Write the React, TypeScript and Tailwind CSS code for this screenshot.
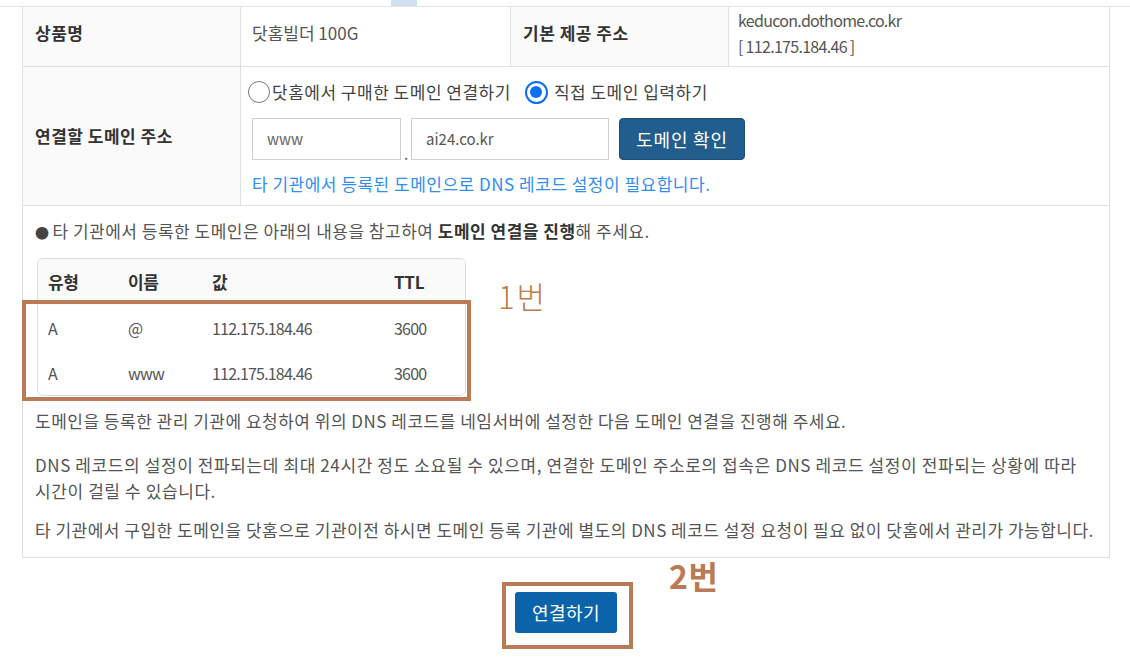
import React from 'react';

const dnsRows = [
  { type: 'A', name: '@', value: '112.175.184.46', ttl: '3600' },
  { type: 'A', name: 'www', value: '112.175.184.46', ttl: '3600' },
];

const font = { fontFamily: '"Noto Sans CJK KR", "Noto Sans", sans-serif' };

export default function App() {
  return (
    <div className="relative w-[1130px] h-[662px] overflow-hidden bg-white text-[17px] tracking-[0.5px] text-[#555]" style={font}>
      {/* top strip */}
      <div className="h-[6px] pl-[391px]">
        <div className="w-[26px] h-[6px] bg-[#cfe0f0]" />
      </div>

      <div className="border-t border-[#e4e4e4]">
        <div className="ml-[22px] w-[1088px] border-x border-b border-[#e0e0e0]">
          {/* row 1 */}
          <div className="grid grid-cols-[218px_270px_218px_1fr] h-[60px] border-b border-[#e0e0e0]">
            <div className="flex items-center pl-[12px] pb-[7px] bg-[#fafafa] border-r border-[#e0e0e0] font-bold text-[#333]">상품명</div>
            <div className="flex items-center pl-[11px] pb-[7px] border-r border-[#e0e0e0] tracking-[0px]">닷홈빌더 100G</div>
            <div className="flex items-center pl-[12px] pb-[7px] bg-[#fafafa] border-r border-[#e0e0e0] font-bold text-[#333]">기본 제공 주소</div>
            <div className="pl-[9px] text-[16px] leading-[26px] tracking-[-0.7px]">
              <div>keducon.dothome.co.kr</div>
              <div>[ 112.175.184.46 ]</div>
            </div>
          </div>

          {/* row 2 */}
          <div className="grid grid-cols-[218px_1fr] h-[139px] border-b border-[#e0e0e0]">
            <div className="flex items-center pl-[12px] bg-[#fafafa] border-r border-[#e0e0e0] font-bold text-[#333]">연결할 도메인 주소</div>
            <div className="pl-[7px] pt-[13px]">
              <div className="flex items-center h-[24px]">
                <span className="w-[22px] h-[22px] rounded-full border-[1.5px] border-[#767676] bg-white" />
                <span className="ml-[2px] text-[#444]">닷홈에서 구매한 도메인 연결하기</span>
                <span className="ml-[14px] w-[23px] h-[23px] rounded-full border-[2px] border-[#0b6ff0] flex items-center justify-center">
                  <span className="w-[12px] h-[12px] rounded-full bg-[#0b6ff0]" />
                </span>
                <span className="ml-[6px] text-[#444]">직접 도메인 입력하기</span>
              </div>
              <div className="flex items-end mt-[14px] pl-[4px] tracking-[0px]">
                <div className="w-[149px] h-[42px] border border-[#cfcfcf] flex items-center pl-[14px] text-[15px] text-[#666]">www</div>
                <span className="w-[10px] text-center leading-[14px] text-[#666]">.</span>
                <div className="w-[198px] h-[42px] border border-[#cfcfcf] flex items-center pl-[14px] text-[15px] text-[#555]">ai24.co.kr</div>
                <button className="ml-[10px] w-[126px] h-[42px] rounded-[4px] bg-[#215d8d] border border-[#1b4f7a] text-white text-[18px] tracking-[0.8px]">도메인 확인</button>
              </div>
              <div className="mt-[12px] pl-[4px] leading-[24px] text-[#2f8ef2]">타 기관에서 등록된 도메인으로 DNS 레코드 설정이 필요합니다.</div>
            </div>
          </div>

          {/* info block */}
          <div className="px-[12px] pt-[12px] pb-[14px] leading-[26px] text-[#555]">
            <p className="whitespace-nowrap">
              <span className="text-[#444] text-[14px] mr-[3px]">●</span>
              타 기관에서 등록한 도메인은 아래의 내용을 참고하여 <b className="text-[#333]">도메인 연결을 진행</b>해 주세요.
            </p>

            <div className="mt-[13px] ml-[2px] w-[429px] border border-[#dcdcdc] rounded-[6px] overflow-hidden">
              <div className="grid grid-cols-[80px_84px_182px_1fr] h-[46px] items-center pl-[10px] bg-[#fafafa] font-bold text-[#333] tracking-[-0.3px]">
                <span>유형</span>
                <span>이름</span>
                <span>값</span>
                <span>TTL</span>
              </div>
              {dnsRows.map((r, i) => (
                <div key={i} className="grid grid-cols-[80px_84px_182px_1fr] h-[45px] items-center pl-[10px] text-[16px] tracking-[-0.8px]">
                  <span>{r.type}</span>
                  <span>{r.name}</span>
                  <span>{r.value}</span>
                  <span>{r.ttl}</span>
                </div>
              ))}
            </div>

            <p className="mt-[12px] whitespace-nowrap">도메인을 등록한 관리 기관에 요청하여 위의 DNS 레코드를 네임서버에 설정한 다음 도메인 연결을 진행해 주세요.</p>
            <p className="mt-[18px] whitespace-nowrap tracking-[0.6px]">
              DNS 레코드의 설정이 전파되는데 최대 24시간 정도 소요될 수 있으며, 연결한 도메인 주소로의 접속은 DNS 레코드 설정이 전파되는 상황에 따라
              <br />
              시간이 걸릴 수 있습니다.
            </p>
            <p className="mt-[13px] whitespace-nowrap">타 기관에서 구입한 도메인을 닷홈으로 기관이전 하시면 도메인 등록 기관에 별도의 DNS 레코드 설정 요청이 필요 없이 닷홈에서 관리가 가능합니다.</p>
          </div>
        </div>

        {/* submit */}
        <div className="ml-[22px] w-[1088px] flex justify-center pt-[34px]">
          <button className="w-[102px] h-[41px] rounded-[3px] bg-[#0b63a9] text-white text-[18px] tracking-[0.5px]">연결하기</button>
        </div>
      </div>

      {/* annotations */}
      <div className="absolute left-[22px] top-[300px] w-[449px] h-[101px] border-[4px] border-[#b97a55]" />
      <div className="absolute left-[498px] top-[276px] text-[31px] font-light leading-[40px] tracking-[2px] text-[#c07b48]">1번</div>
      <div className="absolute left-[502px] top-[582px] w-[131px] h-[67px] border-[4px] border-[#b97a55]" />
      <div className="absolute left-[669px] top-[555px] text-[32px] font-bold leading-[40px] text-[#b97a55]">2번</div>
    </div>
  );
}
